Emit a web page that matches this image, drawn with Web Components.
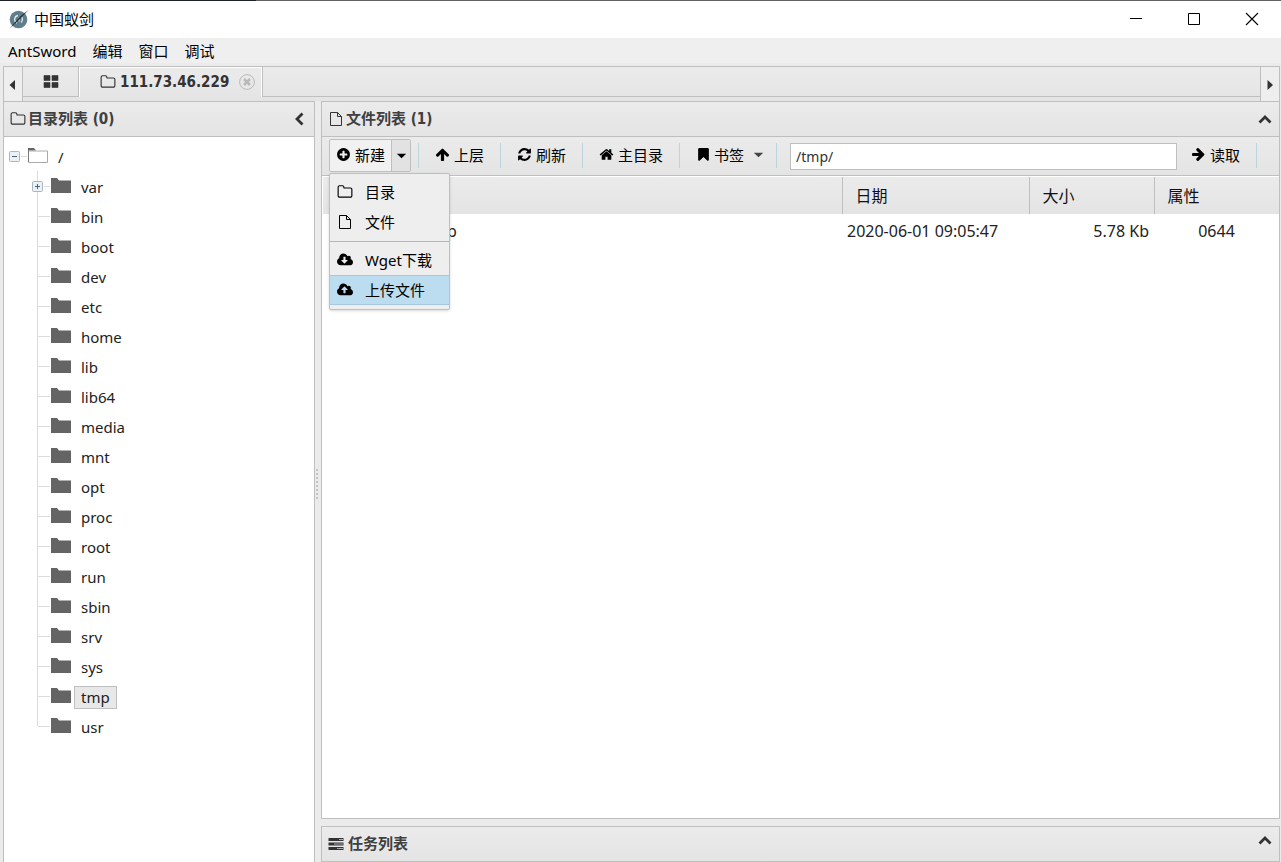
<!DOCTYPE html>
<html lang="zh-CN">
<head>
<meta charset="utf-8">
<title>中国蚁剑</title>
<style>
  html, body { height: 100%; margin: 0; }
  body {
    --line: #bfbfbf;
    --grad: linear-gradient(#ebebeb, #e4e4e4);
    --ui: "DejaVu Sans Condensed", "Noto Sans CJK SC", sans-serif;
    background: #ebebeb;
    color: #222;
    font: 15px/20px "Noto Sans", "Noto Sans CJK SC", sans-serif;
  }
</style>
</head>
<body>
<ant-window>
  <title-bar>中国蚁剑</title-bar>
  <menu-bar></menu-bar>
  <tab-strip></tab-strip>
  <split-layout>
    <ui-panel slot="side" icon="folder" arrow="left" heading="目录列表 (0)"><dir-tree></dir-tree></ui-panel>
    <ui-panel slot="main" class="framed" icon="file" arrow="up" heading="文件列表 (1)">
      <file-toolbar></file-toolbar>
      <file-grid></file-grid>
    </ui-panel>
    <ui-panel slot="foot" class="framed" icon="tasks" arrow="up" heading="任务列表"></ui-panel>
  </split-layout>
</ant-window>

<script>
function define(name, render) {
  customElements.define(name, class extends HTMLElement {
    constructor() {
      super();
      this.attachShadow({ mode: "open" });
    }
    connectedCallback() {
      const t = document.createElement("template");
      t.innerHTML = render(this);
      this.shadowRoot.replaceChildren(t.content.cloneNode(true));
    }
  });
}

const FA = "0 0 1792 1792";
const CLOUD = "M1856 1152q0 159-112.5 271.5t-271.5 112.5h-1088q-185 0-316.5-131.5t-131.5-316.5q0-130 70-240t188-165q-2-30-2-43 0-212 150-362t362-150q156 0 285.5 87t188.5 231q71-62 166-62 106 0 181 75t75 181q0 76-41 138 130 31 213.5 135.5t83.5 238.5z";
const ARROW = "M1675 971q0 51-37 90l-75 75q-38 38-91 38-54 0-90-38l-294-293v704q0 52-37.5 84.5t-90.5 32.5h-128q-53 0-90.5-32.5t-37.5-84.5v-704l-294 293q-36 38-90 38t-90-38l-75-75q-38-38-38-90 0-53 38-91l651-651q35-37 90-37 54 0 91 37l651 651q37 39 37 91z";
const ICONS = {
  logo: ["0 0 20 20", `<circle cx="9.5" cy="10.500" r="8.800" fill="#607d8b"/><g fill="none" stroke="#dfe8ec" stroke-width="1.300"><path d="M9 6.500a4 4 0 0 0-1 7.600M11.500 7a4 4 0 0 1 .5 6.600"/><path d="M10 8.500v4"/></g><path d="M19.500 1 8.500 12.500.500 19.500 11 7.500z" fill="#26323a"/>`],
  folder: [FA, `<path d="M1600 1312v-704q0-40-28-68t-68-28h-704q-40 0-68-28t-28-68v-64q0-40-28-68t-68-28h-320q-40 0-68 28t-28 68v960q0 40 28 68t68 28h1216q40 0 68-28t28-68zm128-704v704q0 92-66 158t-158 66h-1216q-92 0-158-66t-66-158v-960q0-92 66-158t158-66h320q92 0 158 66t66 158v32h672q92 0 158 66t66 158z"/>`],
  file: ["0 0 16 16", `<path d="M2.500 1.500h7l4 4v9h-11zM9.500 1.500v4h4" fill="none" stroke="currentColor" stroke-linejoin="round"/>`],
  grid: ["0 0 16 16", `<path d="M1 2.500h6v5H1zM9 2.500h6v5H9zM1 9.500h6v5H1zM9 9.500h6v5H9z" stroke="currentColor" stroke-width=".6" stroke-linejoin="round"/>`],
  tasks: ["0 0 16 16", `<path d="M.5 2h15v3H.5zM.5 6.500h15v3H.5zM.5 11h15v3H.5z"/><path d="M11 3h4v1h-4zM6 7.500h9v1H6zM9 12h6v1H9z" fill="#aaa"/>`],
  plus: [FA, `<path d="M1344 960v-128q0-26-19-45t-45-19h-256v-256q0-26-19-45t-45-19h-128q-26 0-45 19t-19 45v256h-256q-26 0-45 19t-19 45v128q0 26 19 45t45 19h256v256q0 26 19 45t45 19h128q26 0 45-19t19-45v-256h256q26 0 45-19t19-45zm320-64q0 209-103 385.500t-279.500 279.500-385.500 103-385.500-103-279.500-279.500-103-385.500 103-385.500 279.500-279.500 385.500-103 385.500 103 279.500 279.500 103 385.500z"/>`],
  up: [FA, `<path d="${ARROW}"/>`],
  right: [FA, `<path transform="rotate(90 896 896)" d="${ARROW}"/>`],
  refresh: [FA, `<path d="M1639 1056q0 5-1 7-64 268-268 434.500t-478 166.500q-146 0-282.500-55t-243.500-157l-129 129q-19 19-45 19t-45-19-19-45v-448q0-26 19-45t45-19h448q26 0 45 19t19 45-19 45l-137 137q71 66 161 102t187 36q134 0 250-65t186-179q11-17 53-117 8-23 30-23h192q13 0 22.500 9.500t9.500 22.500zm25-800v448q0 26-19 45t-45 19h-448q-26 0-45-19t-19-45 19-45l138-138q-148-137-349-137-134 0-250 65t-186 179q-11 17-53 117-8 23-30 23h-199q-13 0-22.500-9.500t-9.500-22.500v-7q65-268 270-434.500t480-166.500q146 0 284 55.500t245 156.500l130-129q19-19 45-19t45 19 19 45z"/>`],
  home: [FA, `<path d="M1472 992v480q0 26-19 45t-45 19h-384v-384h-256v384h-384q-26 0-45-19t-19-45v-480q0-1 .5-3t.5-3l575-474 575 474q1 2 1 6zm223-69l-62 74q-8 9-21 11h-3q-13 0-21-7l-692-577-692 577q-12 8-24 7-13-2-21-11l-62-74q-8-10-7-23.500t11-21.500l719-599q32-26 76-26t76 26l244 204v-195q0-14 9-23t23-9h192q14 0 23 9t9 23v408l219 182q10 8 11 21.500t-7 23.500z"/>`],
  bookmark: [FA, `<path d="M1420 128q23 0 44 9 33 13 52.500 41t19.500 62v1289q0 34-19.500 62t-52.500 41q-19 8-44 8-48 0-83-32l-441-424-441 424q-36 33-83 33-23 0-44-9-33-13-52.500-41t-19.500-62v-1289q0-34 19.500-62t52.500-41q21-9 44-9h1048z"/>`],
  download: ["-64 -64 1920 1920", `<path d="${CLOUD}"/><path fill="#eee" d="M1216 928q0-14-9-23t-23-9h-224v-352q0-13-9.500-22.500t-22.500-9.500h-192q-13 0-22.500 9.500t-9.500 22.500v352h-224q-13 0-22.500 9.500t-9.500 22.500q0 14 9 23l352 352q9 9 23 9t23-9l351-351q10-12 10-24z"/>`],
  upload: ["-64 -64 1920 1920", `<path d="${CLOUD}"/><path fill="#bcdcf0" d="M1216 864q0-14-9-23l-352-352q-9-9-23-9t-23 9l-351 351q-10 12-10 24 0 14 9 23t23 9h224v352q0 13 9.500 22.500t22.500 9.500h192q13 0 22.500-9.500t9.500-22.500v-352h224q13 0 22.500-9.500t9.500-22.500z"/>`],
  "chev-left": ["0 0 16 16", `<path d="M10.500 2.500 5 8l5.500 5.500" fill="none" stroke="currentColor" stroke-width="2.800"/>`],
  "chev-up": ["0 0 16 16", `<path d="M2.500 11.500 8 6l5.500 5.500" fill="none" stroke="currentColor" stroke-width="2.800"/>`],
  caret: ["0 0 16 16", `<path d="M3 6h10l-5 5z"/>`],
  "tri-left": ["0 0 16 16", `<path d="M10 3v10L4.500 8z"/>`],
  "tri-right": ["0 0 16 16", `<path d="M5.500 3v10l5.500-5z"/>`],
  close: ["0 0 16 16", `<g fill="none" stroke="#b9b9b9"><circle cx="8" cy="8" r="7.400"/><path d="m5 5 6 6M11 5l-6 6" stroke-width="2.500"/></g>`],
  min: ["0 0 16 16", `<path d="M2 7h12v1H2z"/>`],
  max: ["0 0 16 16", `<path d="M2.500 2.500h11v11h-11z" fill="none" stroke="currentColor"/>`],
  exit: ["0 0 16 16", `<path d="m2 2 12 12M14 2 2 14" fill="none" stroke="currentColor" stroke-width="1.100"/>`],
  dir: ["0 0 22 16", `<path d="M1 0h6l2 2.500h12V15H1z" fill="#646464"/>`],
  "dir-open": ["0 0 22 16", `<path d="M1 0h6l2 2.500H1z" fill="#646464"/><path d="M1.500 3h19v11.500h-19z" fill="#fff" stroke="#aaa"/><path d="M1.500 14V2" stroke="#777"/>`],
  minus: ["0 0 12 12", `<rect x=".5" y="1.500" width="10" height="10" rx="1" fill="#eaf0f4" stroke="#a9b7c2"/><path d="M3 6h5v1H3z" fill="#46647c"/>`],
  expand: ["0 0 12 12", `<rect x=".5" y="1.500" width="10" height="10" rx="1" fill="#eaf0f4" stroke="#a9b7c2"/><path d="M3 6h5v1H3zM5 4h1v5H5z" fill="#46647c"/>`]
};

define("ui-icon", el => {
  const [box, body] = ICONS[el.getAttribute("name")];
  return `<style>
    :host { display: inline-block; width: 16px; height: 16px; flex: none; }
    svg { display: block; width: 100%; height: 100%; fill: currentColor; }
  </style><svg viewBox="${box}" aria-hidden="true">${body}</svg>`;
});

define("ant-window", () => `<style>
    :host { display: flex; flex-direction: column; height: 100vh; overflow: hidden; box-sizing: border-box; padding-top: 1px; background: linear-gradient(90deg, #1e2028 20%, #626262 20%) top / 100% 1px no-repeat; }
  </style><slot></slot>`);

define("title-bar", () => `<style>
    :host { display: flex; align-items: center; height: 37px; flex: none; box-sizing: border-box; background: #fff; color: #000; padding: 0 0 2px 9px; }
    .logo { width: 20px; height: 20px; margin-right: 5px; }
    span { flex: 1; }
    button { width: 58px; height: 34px; padding: 0; border: 0; background: none; color: #000; display: grid; place-items: center; }
  </style>
  <ui-icon class="logo" name="logo"></ui-icon><span><slot></slot></span>
  <button aria-label="最小化"><ui-icon name="min"></ui-icon></button>
  <button aria-label="最大化"><ui-icon name="max"></ui-icon></button>
  <button aria-label="关闭"><ui-icon name="exit"></ui-icon></button>`);

define("menu-bar", () => `<style>
    :host { display: block; flex: none; background: #efefef; color: #000; }
    nav { display: flex; gap: 16px; height: 25px; align-items: center; padding-left: 8px; }
    button { font: inherit; color: inherit; border: 0; padding: 0; background: none; }
  </style>
  <nav><button>AntSword</button><button>编辑</button><button>窗口</button><button>调试</button></nav>`);

define("tab-strip", () => `<style>
    :host { display: flex; flex: none; height: 34px; margin: 3px 1px 0 3px; border: 1px solid var(--line); border-bottom: 0; background: var(--grad); color: #333; }
    button { font: inherit; color: inherit; background: none; border: 0; padding: 0; display: grid; place-items: center; }
    .nav { width: 19px; padding-top: 2px; background: #eee; }
    .prev { border-right: 1px solid var(--line); }
    .next { border-left: 1px solid var(--line); }
    .nav ui-icon { width: 16px; height: 16px; }
    .home { width: 56px; height: 30px; padding-bottom: 2px; border-bottom: 1px solid var(--line); border-right: 1px solid var(--line); box-sizing: border-box; }
    .tab { display: flex; align-items: center; height: 30px; box-sizing: border-box; padding: 0 6px 2px 20px; width: 183px; border: 1px solid #fff; border-width: 1px 1px 0; }
    .tab a { color: inherit; text-decoration: none; font: bold 15px/20px var(--ui); flex: 1; margin-left: 4px; white-space: nowrap; }
    .rest { flex: 1; height: 29px; border-left: 1px solid var(--line); border-bottom: 1px solid var(--line); }
    .x { width: 16px; height: 16px; }
  </style>
  <button class="nav prev" aria-label="向左"><ui-icon name="tri-left"></ui-icon></button>
  <button class="home" aria-label="主页"><ui-icon name="grid"></ui-icon></button>
  <div class="tab"><ui-icon name="folder"></ui-icon><a href="#shell">111.73.46.229</a><button class="x" aria-label="关闭标签"><ui-icon name="close"></ui-icon></button></div>
  <div class="rest"></div>
  <button class="nav next" aria-label="向右"><ui-icon name="tri-right"></ui-icon></button>`);

define("split-layout", () => `<style>
    :host { display: grid; flex: 1; min-height: 0; grid-template-columns: 312px minmax(0, 1fr); column-gap: 6px; margin: 0 1px 0 3px; }
    .side { display: flex; min-height: 0; position: relative; }
    .main { display: flex; flex-direction: column; gap: 7px; min-height: 0; }
    ::slotted([slot="side"]), ::slotted([slot="main"]) { flex: 1; min-width: 0; min-height: 0; }
    .grip { position: absolute; left: 100%; top: calc(50% - 13px); width: 2px; height: 30px; margin-left: 1px; background: repeating-linear-gradient(#c4c4c4 0 2px, transparent 2px 4px); }
  </style>
  <div class="side"><slot name="side"></slot><div class="grip"></div></div>
  <div class="main"><slot name="main"></slot><slot name="foot"></slot></div>`);

define("ui-panel", el => `<style>
    :host { display: flex; flex-direction: column; border: 1px solid var(--line); border-bottom: 0; box-sizing: border-box; background: #fff; }
    :host(.framed) { border-bottom: 1px solid var(--line); }
    header { display: flex; align-items: center; flex: none; height: 34px; padding: 0 6px; background: var(--grad); color: #333; }
    :host(:not([slot="foot"])) header { border-bottom: 1px solid var(--line); }
    h2 { flex: 1; margin: 0 0 0 2px; font: bold 15px/20px var(--ui); color: #404040; }
    button { border: 0; background: none; padding: 0; color: #333; display: grid; }
    button ui-icon { width: 16px; height: 16px; }
    :host([slot="foot"]) h2 { margin-left: 4px; }
    :host([slot="foot"]) button { padding-bottom: 8px; }
  </style>
  <header><ui-icon name="${el.getAttribute("icon")}"></ui-icon><h2>${el.getAttribute("heading")}</h2>
  <button aria-label="折叠"><ui-icon name="chev-${el.getAttribute("arrow")}"></ui-icon></button></header>
  <slot></slot>`);

const DIRS = ["var", "bin", "boot", "dev", "etc", "home", "lib", "lib64", "media", "mnt", "opt", "proc", "root", "run", "sbin", "srv", "sys", "tmp", "usr"];
define("dir-tree", () => `<style>
    :host { display: block; padding: 4px 5px; color: #222; }
    ul { list-style: none; margin: 0; padding: 0; }
    .row { display: flex; align-items: center; height: 30px; }
    ui-icon[name^="dir"] { width: 22px; margin-right: 2px; }
    .row > .box { width: 12px; height: 12px; }
    .tick { width: 6px; height: 1px; background: #dcdcdc; }
    .name { border: 1px solid transparent; padding: 0 6px; line-height: 21px; margin-top: 2px; }
    .sel .name { background: #e8e8e8; border-color: var(--line); }
    .kids .row { padding-left: 23px; background: linear-gradient(#dcdcdc, #dcdcdc) 28px 0 / 1px 100% no-repeat; }
    .kids li:last-child .row { background-size: 1px 15px; }
    .kids .leaf .tick { width: 12px; margin-left: 6px; }
  </style>
  <ul><li><div class="row"><ui-icon class="box" name="minus"></ui-icon><span class="tick"></span><ui-icon name="dir-open"></ui-icon><span class="name">/</span></div>
  <ul class="kids">${DIRS.map((d, i) => `<li><div class="row ${i ? "leaf" : ""} ${d === "tmp" ? "sel" : ""}">${i ? "" : '<ui-icon class="box" name="expand"></ui-icon>'}<span class="tick"></span><ui-icon name="dir"></ui-icon><span class="name">${d}</span></div></li>`).join("")}</ul></li></ul>`);

define("drop-menu", () => `<style>
    :host { display: block; width: 119px; box-sizing: content-box; padding: 3px 0 4px; background: #eee; border: 1px solid var(--line); border-radius: 2px; box-shadow: 0 1px 3px rgba(0,0,0,.15); color: #000; }
    button { display: flex; align-items: center; gap: 12px; width: 100%; height: 30px; padding: 0 7px; border: 1px solid transparent; border-width: 1px 0; background: none; font: inherit; color: inherit; text-align: left; white-space: nowrap; }
    .on { background: #bcdcf0; border-color: #a4c8e0; }
    hr { border: 0; border-top: 1px solid #a9b8c1; margin: 4px 0 3px; }
  </style>
  <button><ui-icon name="folder"></ui-icon>目录</button>
  <button><ui-icon name="file"></ui-icon>文件</button>
  <hr>
  <button><ui-icon name="download"></ui-icon>Wget下载</button>
  <button class="on"><ui-icon name="upload"></ui-icon>上传文件</button>`);

define("file-toolbar", () => `<style>
    :host { display: flex; flex: none; align-items: flex-start; box-sizing: border-box; height: 39px; padding: 2px 0 0 7px; background: var(--grad); border-bottom: 1px solid var(--line); color: #000; }
    button { display: flex; align-items: center; gap: 4px; height: 31px; padding: 0; border: 0; background: none; font: inherit; color: inherit; white-space: nowrap; }
    .split { display: flex; position: relative; height: 31px; border: 1px solid var(--line); border-radius: 2px; background: #f1f1f1; }
    .split .go { padding: 0 6px; width: 61px; height: 29px; box-sizing: border-box; }
    .split .more { width: 19px; border-left: 1px solid var(--line); background: #e2e2e2; height: 31px; justify-content: center; }
    drop-menu { position: absolute; top: 33px; left: -1px; }
    i { width: 1px; height: 25px; background: #bcd5dc; margin: 4px 16px 0; }
    i.near { margin-left: 7px; }
    i.end { margin-right: 22px; }
    i.gap { margin: 4px 13px 0 10px; }
    ui-icon { width: 15px; height: 15px; }
    input { flex: 1; min-width: 0; box-sizing: border-box; height: 27px; margin: 4px 14px 0 0; padding: 0 5px; border: 1px solid var(--line); background: #fff; font: 14px/20px "Noto Sans", sans-serif; color: #333; }
    .mark { gap: 3px; }
    .mark ui-icon:last-child { margin-left: 4px; color: #444; }
  </style>
  <div class="split"><button class="go"><ui-icon name="plus"></ui-icon>新建</button><button class="more" aria-label="更多"><ui-icon name="caret"></ui-icon></button><drop-menu></drop-menu></div>
  <i class="near"></i><button><ui-icon name="up"></ui-icon>上层</button>
  <i></i><button><ui-icon name="refresh"></ui-icon>刷新</button>
  <i></i><button><ui-icon name="home"></ui-icon>主目录</button>
  <i></i><button class="mark"><ui-icon name="bookmark"></ui-icon>书签<ui-icon name="caret"></ui-icon></button>
  <i class="gap"></i><input aria-label="路径" value="/tmp/"><button><ui-icon name="right"></ui-icon>读取</button>
  <i class="end"></i>`);

define("file-grid", () => `<style>
    :host { display: block; padding: 1px 0 0 1px; font-size: 16px; }
    table { width: 100%; table-layout: fixed; border-collapse: collapse; }
    .date { width: 187px; } .size { width: 125px; } .attr { width: 125px; }
    thead tr { height: 37px; background: var(--grad); }
    th { padding: 0 13px; font-weight: normal; text-align: left; border-left: 1px solid var(--line); color: #111; }
    th:first-child { border: 0; }
    td { height: 34px; padding: 0 5px; white-space: nowrap; }
    td:first-child { padding-left: 124px; }
    td:nth-child(3) { text-align: right; }
    td:nth-child(4) { text-align: center; }
  </style>
  <table><colgroup><col><col class="date"><col class="size"><col class="attr"></colgroup>
  <thead><tr><th></th><th>日期</th><th>大小</th><th>属性</th></tr></thead>
  <tbody><tr><td>p</td><td>2020-06-01 09:05:47</td><td>5.78 Kb</td><td>0644</td></tr></tbody></table>`);
</script>
</body>
</html>
